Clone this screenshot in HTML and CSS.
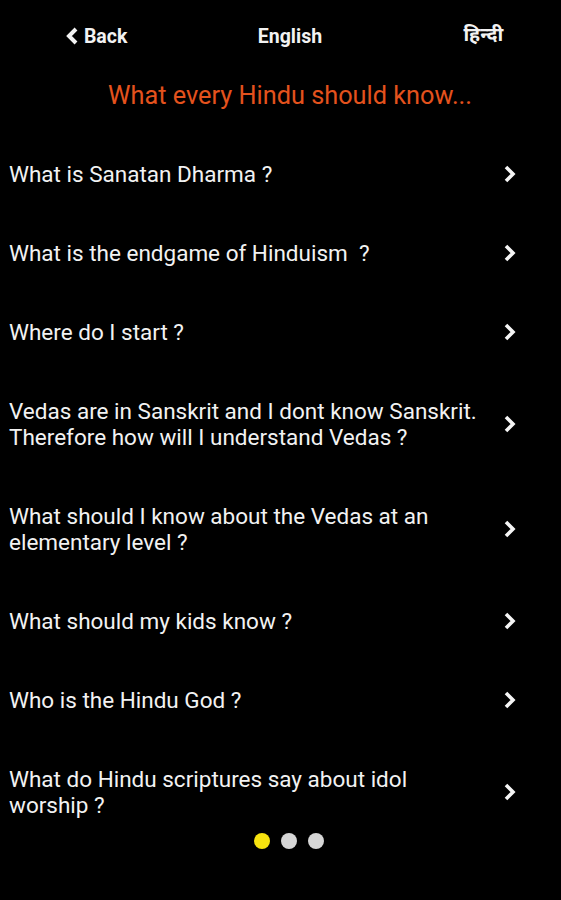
FILE: index.html
```html
<!DOCTYPE html>
<html>
<head>
<meta charset="utf-8">
<link rel="stylesheet" href="styles.css">
</head>
<body>
<div class="page">
  <header class="topbar">
    <div class="nav back">
      <svg class="back-icon" width="13" height="20" viewBox="0 0 13 20"><polyline points="10,3 3,10 10,17" fill="none" stroke="#f2f2f2" stroke-width="4"/></svg>
      <span>Back</span>
    </div>
    <div class="nav">English</div>
    <div class="nav hindi">हिन्दी</div>
  </header>
  <h1 class="title">What every Hindu should know...</h1>
  <ul class="list">
    <li class="row"><span class="q">What is Sanatan Dharma ?</span><svg class="chev" width="14" height="20" viewBox="0 0 14 20"><polyline points="3,3 10,10 3,17" fill="none" stroke="#f5f5f5" stroke-width="3.6"/></svg></li>
    <li class="row"><span class="q">What is the endgame of Hinduism&nbsp; ?</span><svg class="chev" width="14" height="20" viewBox="0 0 14 20"><polyline points="3,3 10,10 3,17" fill="none" stroke="#f5f5f5" stroke-width="3.6"/></svg></li>
    <li class="row"><span class="q">Where do I start ?</span><svg class="chev" width="14" height="20" viewBox="0 0 14 20"><polyline points="3,3 10,10 3,17" fill="none" stroke="#f5f5f5" stroke-width="3.6"/></svg></li>
    <li class="row"><span class="q">Vedas are in Sanskrit and I dont know Sanskrit. Therefore how will I understand Vedas ?</span><svg class="chev" width="14" height="20" viewBox="0 0 14 20"><polyline points="3,3 10,10 3,17" fill="none" stroke="#f5f5f5" stroke-width="3.6"/></svg></li>
    <li class="row"><span class="q">What should I know about the Vedas at an elementary level ?</span><svg class="chev" width="14" height="20" viewBox="0 0 14 20"><polyline points="3,3 10,10 3,17" fill="none" stroke="#f5f5f5" stroke-width="3.6"/></svg></li>
    <li class="row"><span class="q">What should my kids know ?</span><svg class="chev" width="14" height="20" viewBox="0 0 14 20"><polyline points="3,3 10,10 3,17" fill="none" stroke="#f5f5f5" stroke-width="3.6"/></svg></li>
    <li class="row"><span class="q">Who is the Hindu God ?</span><svg class="chev" width="14" height="20" viewBox="0 0 14 20"><polyline points="3,3 10,10 3,17" fill="none" stroke="#f5f5f5" stroke-width="3.6"/></svg></li>
    <li class="row"><span class="q">What do Hindu scriptures say about idol worship ?</span><svg class="chev" width="14" height="20" viewBox="0 0 14 20"><polyline points="3,3 10,10 3,17" fill="none" stroke="#f5f5f5" stroke-width="3.6"/></svg></li>
  </ul>
  <div class="dots">
    <span class="dot active"></span>
    <span class="dot"></span>
    <span class="dot"></span>
  </div>
</div>
</body>
</html>
```
FILE: styles.css
```css
html, body {
  margin: 0;
  padding: 0;
  background: #000;
  overflow: hidden;
}
body {
  font-family: Roboto, "Liberation Sans", sans-serif;
  color: #f2f2f2;
  height: 900px;
}
.page {
  width: 580px;
}
.topbar {
  display: grid;
  grid-template-columns: repeat(3, 1fr);
  height: 72px;
  align-items: center;
}
.nav {
  font-weight: bold;
  font-size: 19.5px;
  text-align: center;
  display: flex;
  justify-content: center;
  align-items: center;
  gap: 5px;
}
.hindi {
  font-family: "Noto Sans Devanagari", "Lohit Devanagari", "Noto Sans", sans-serif;
}
.back-icon {
  display: block;
}
.title {
  margin: 8px 0 0;
  font-size: 25.3px;
  line-height: 32px;
  font-weight: normal;
  color: #e4521d;
  text-align: center;
}
.list {
  list-style: none;
  margin: 49px 0 0;
  padding: 0;
  display: flex;
  flex-direction: column;
  gap: 53px;
}
.row {
  display: flex;
  align-items: center;
  padding-left: 9px;
}
.q {
  width: 482px;
  font-size: 22.5px;
  line-height: 26px;
}
.chev {
  margin-left: 12px;
  display: block;
}
.dots {
  display: flex;
  gap: 11px;
  margin: 15px 0 0 254px;
}
.dot {
  width: 16px;
  height: 16px;
  border-radius: 50%;
  background: #d6d6d6;
}
.dot.active {
  background: #f7e30f;
}
```
